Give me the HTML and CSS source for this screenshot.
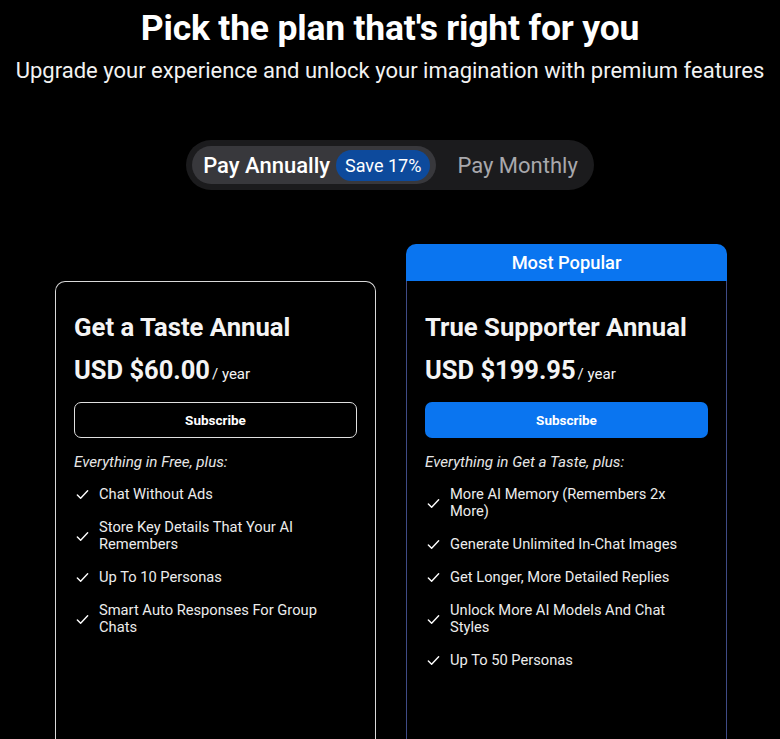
FILE: index.html
```html
<!DOCTYPE html>
<html>
<head>
<meta charset="utf-8">
<link rel="stylesheet" href="styles.css">
</head>
<body>
<div class="page">
  <h1 class="title">Pick the plan that's right for you</h1>
  <p class="subtitle">Upgrade your experience and unlock your imagination with premium features</p>
  <div class="toggle-wrap">
    <div class="toggle">
      <div class="opt active">Pay Annually <span class="save">Save 17%</span></div>
      <div class="opt">Pay Monthly</div>
    </div>
  </div>
  <div class="plans">
    <div class="plan-col">
      <div class="card">
        <h2 class="plan-name">Get a Taste Annual</h2>
        <div class="price">USD $60.00<span class="per">/ year</span></div>
        <button class="btn outline">Subscribe</button>
        <p class="intro">Everything in Free, plus:</p>
        <ul class="features">
          <li><svg class="chk" viewBox="0 0 16 16"><path d="M2.5 8.5l3.5 3.5 7.5-8"/></svg><span>Chat Without Ads</span></li>
          <li><svg class="chk" viewBox="0 0 16 16"><path d="M2.5 8.5l3.5 3.5 7.5-8"/></svg><span>Store Key Details That Your AI Remembers</span></li>
          <li><svg class="chk" viewBox="0 0 16 16"><path d="M2.5 8.5l3.5 3.5 7.5-8"/></svg><span>Up To 10 Personas</span></li>
          <li><svg class="chk" viewBox="0 0 16 16"><path d="M2.5 8.5l3.5 3.5 7.5-8"/></svg><span>Smart Auto Responses For Group Chats</span></li>
        </ul>
      </div>
    </div>
    <div class="plan-col">
      <div class="badge">Most Popular</div>
      <div class="card popular">
        <h2 class="plan-name">True Supporter Annual</h2>
        <div class="price">USD $199.95<span class="per">/ year</span></div>
        <button class="btn solid">Subscribe</button>
        <p class="intro">Everything in Get a Taste, plus:</p>
        <ul class="features">
          <li><svg class="chk" viewBox="0 0 16 16"><path d="M2.5 8.5l3.5 3.5 7.5-8"/></svg><span>More AI Memory (Remembers 2x More)</span></li>
          <li><svg class="chk" viewBox="0 0 16 16"><path d="M2.5 8.5l3.5 3.5 7.5-8"/></svg><span>Generate Unlimited In-Chat Images</span></li>
          <li><svg class="chk" viewBox="0 0 16 16"><path d="M2.5 8.5l3.5 3.5 7.5-8"/></svg><span>Get Longer, More Detailed Replies</span></li>
          <li><svg class="chk" viewBox="0 0 16 16"><path d="M2.5 8.5l3.5 3.5 7.5-8"/></svg><span>Unlock More AI Models And Chat Styles</span></li>
          <li><svg class="chk" viewBox="0 0 16 16"><path d="M2.5 8.5l3.5 3.5 7.5-8"/></svg><span>Up To 50 Personas</span></li>
        </ul>
      </div>
    </div>
  </div>
</div>
</body>
</html>
```
FILE: styles.css
```css
* { box-sizing: border-box; }
html, body { margin: 0; padding: 0; background: #000; height: 739px; overflow: hidden; }
body { font-family: Roboto, "Liberation Sans", sans-serif; color: #fff; }
.page { display: flex; flex-direction: column; align-items: center; padding-top: 5px; }
.title { margin: 0; font-size: 35.5px; font-weight: 700; line-height: 46px; letter-spacing: -0.2px; white-space: nowrap; }
.subtitle { margin: 6px 0 0; font-size: 22px; font-weight: 400; line-height: 28px; color: #f2f2f2; white-space: nowrap; }
.toggle-wrap { margin-top: 55px; }
.toggle { display: flex; align-items: center; background: #1b1b1d; border-radius: 26px; padding: 6px 16px 6px 6px; height: 50px; white-space: nowrap; }
.opt { display: flex; align-items: center; height: 38px; font-size: 22px; font-weight: 400; color: #a8a8ac; padding: 0 0 0 21px; white-space: nowrap; flex: none; }
.opt.active { background: #38383c; color: #fff; font-weight: 500; border-radius: 20px; padding: 0 6px 0 11px; gap: 6px; }
.save { background: #0d4a9c; color: #fff; font-size: 18px; font-weight: 400; height: 31px; line-height: 31px; padding: 0 9px; border-radius: 16px; white-space: nowrap; }
.plans { display: flex; gap: 30px; margin-top: 54px; align-items: flex-end; padding-left: 2px; }
.plan-col { width: 321px; display: flex; flex-direction: column; }
.badge { background: #0a75f0; color: #fff; height: 37px; line-height: 37px; text-align: center; font-size: 18.3px; font-weight: 500; border-radius: 10px 10px 0 0; }
.card { border: 1px solid #d9d9d9; border-radius: 10px 10px 0 0; border-bottom: none; height: 460px; padding: 28px 18px 0; }
.card.popular { border-color: #3f4b86; border-top: none; border-radius: 0; padding-top: 29px; }
.plan-name { margin: 0; font-size: 25.7px; font-weight: 700; line-height: 34px; color: #f4f4f4; white-space: nowrap; }
.price { margin-top: 11px; font-size: 25.5px; font-weight: 700; line-height: 30px; color: #f4f4f4; }
.per { font-size: 15px; font-weight: 400; margin-left: 2px; }
.btn { display: block; width: 100%; height: 36px; margin-top: 13px; border-radius: 7px; font-family: inherit; font-size: 13.5px; font-weight: 700; color: #fff; cursor: pointer; }
.btn.outline { background: #000; border: 1px solid #e0e0e0; }
.btn.solid { background: #0a75f0; border: none; }
.intro { margin: 16px 0 0; font-size: 15.2px; font-style: italic; line-height: 17px; color: #e6e6e6; }
.features { list-style: none; margin: 15px 0 0; padding: 0 0 0 1px; display: flex; flex-direction: column; gap: 16px; }
.features li { display: flex; align-items: center; gap: 9px; font-size: 14.7px; line-height: 17px; color: #ececec; padding-right: 30px; }
.chk { width: 15px; height: 15px; flex: none; fill: none; stroke: #fff; stroke-width: 1.5; stroke-linecap: round; stroke-linejoin: round; }
```
